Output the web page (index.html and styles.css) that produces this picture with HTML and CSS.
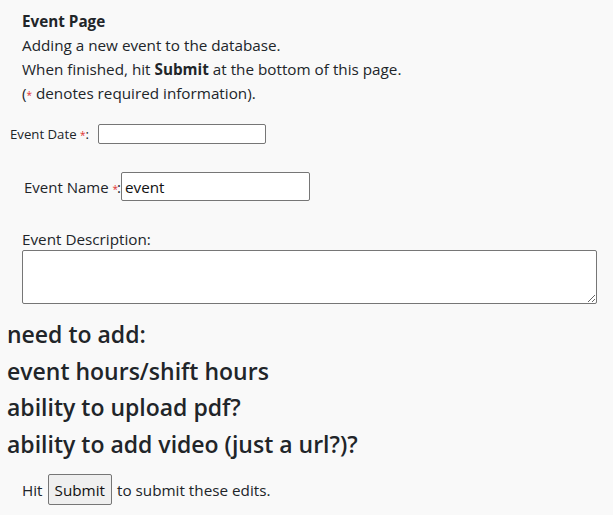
FILE: index.html
```html
<!DOCTYPE html>
<html>
<head>
<meta charset="utf-8">
<link rel="stylesheet" href="styles.css">
</head>
<body>
<div class="intro">
  <div class="title">Event Page</div>
  <div>Adding a new event to the database.</div>
  <div>When finished, hit <b>Submit</b> at the bottom of this page.</div>
  <div>(<span class="req">*</span> denotes required information).</div>
</div>
<div class="row-date">
  <label>Event Date <span class="req">*</span>:</label>
  <input type="text" class="in-date">
</div>
<div class="row-name">
  <label>Event Name <span class="req">*</span>:</label><input type="text" class="in-name" value="event">
</div>
<div class="row-desc">
  <label>Event Description:</label>
  <textarea class="in-desc"></textarea>
</div>
<div class="notes">
  <h4>need to add:</h4>
  <h4>event hours/shift hours</h4>
  <h4>ability to upload pdf?</h4>
  <h4>ability to add video (just a url?)?</h4>
</div>
<div class="submit-row">Hit <button class="btn">Submit</button> to submit these edits.</div>
</body>
</html>
```
FILE: styles.css
```css
html, body {
  margin: 0;
  padding: 0;
  background: #f9f9f9;
  color: #212529;
  font-family: "Open Sans", "Noto Sans", sans-serif;
}
.intro {
  padding: 9px 0 0 22px;
  font-size: 15.25px;
  line-height: 24px;
}
.title { font-weight: 700; }
.req { color: #e03030; font-size: 10px; }
.row-date {
  display: flex;
  align-items: center;
  gap: 8px;
  margin-top: 17px;
  padding-left: 10px;
  font-size: 13.2px;
}
.in-date {
  width: 168px;
  height: 20px;
  box-sizing: border-box;
  border: 1px solid #767676;
  border-radius: 2px;
  background: #fff;
  margin: 0 0 0 1px;
  padding: 0 4px;
}
.row-name {
  display: flex;
  align-items: center;
  margin-top: 28px;
  padding-left: 24px;
  font-size: 15px;
}
.row-name .req { margin-right: -1px; }
.in-name {
  width: 189px;
  height: 29px;
  box-sizing: border-box;
  border: 1px solid #767676;
  border-radius: 2px;
  background: #fff;
  margin: 0;
  padding: 0 3px;
  font: 15.25px "Open Sans", sans-serif;
  color: #111;
}
.row-desc {
  padding-left: 22px;
  margin-top: 27px;
  font-size: 15.25px;
}
.row-desc label { display: block; line-height: 22px; }
.in-desc {
  display: block;
  width: 575px;
  height: 54px;
  box-sizing: border-box;
  border: 1px solid #767676;
  border-radius: 2px;
  background: #fff;
  margin: 0;
}
.notes { padding-left: 7px; margin-top: 12px; }
.notes h4 {
  margin: 0;
  font-size: 23px;
  font-weight: 600;
  line-height: 36.5px;
}
.submit-row {
  padding-left: 22px;
  margin-top: 12px;
  font-size: 15.25px;
  display: flex;
  align-items: center;
  gap: 5px;
}
.btn {
  font: 15.25px "Open Sans", sans-serif;
  color: #111;
  background: #efefef;
  border: 1px solid #767676;
  border-radius: 2px;
  padding: 4px 6px;
  height: 31px;
}
```
